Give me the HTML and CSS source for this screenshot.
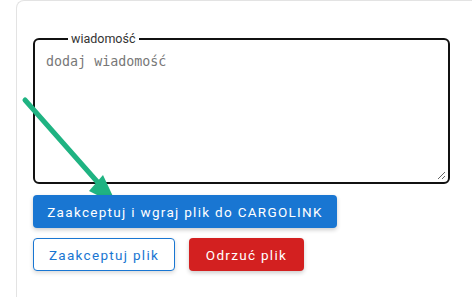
FILE: index.html
```html
<!DOCTYPE html>
<html>
<head>
    <meta charset="utf-8">
    <title>Plik</title>
    <link rel="stylesheet" href="styles.css">
</head>
<body>
    <div class="card">
        <fieldset class="msg">
            <legend>wiadomość</legend>
            <textarea placeholder="dodaj wiadomość"></textarea>
        </fieldset>

        <div class="actions">
            <button class="btn btn-primary">Zaakceptuj i wgraj plik do CARGOLINK</button>
            <div class="row">
                <button class="btn btn-outline">Zaakceptuj plik</button>
                <button class="btn btn-danger">Odrzuć plik</button>
            </div>
        </div>

        <!-- strzałka podpowiedzi -->
        <svg class="hint" width="140" height="220" viewBox="0 0 140 220">
            <line x1="25" y1="100" x2="101" y2="186" stroke="#1fb382" stroke-width="5" stroke-linecap="round"/>
            <polygon points="117,205 89,191 103,175" fill="#1fb382"/>
        </svg>
    </div>
</body>
</html>
```

FILE: styles.css
```css
html, body {
    height: 100%;
}

body {
    margin: 0;
    background: #ffffff;
    font-family: Roboto, "Liberation Sans", sans-serif;
    overflow: hidden;
}

.card {
    margin-left: 16px;
    height: 100%;
    box-sizing: border-box;
    border: 1px solid #e3e3e3;
    border-right: 0;
    border-bottom: 0;
    border-radius: 8px 0 0 0;
    padding: 30px 0 0 16px;
}

.msg {
    width: 417px;
    height: 153px;
    box-sizing: border-box;
    margin: 0;
    padding: 0 2px 2px 11px;
    border: 2px solid #111111;
    border-radius: 6px;
    display: flex;
}

.msg legend {
    margin-left: 22px;
    padding: 0 3px;
    font-size: 12.5px;
    color: #333333;
}

.msg textarea {
    flex: 1;
    border: 0;
    outline: none;
    padding: 8px 0 0 0;
    font-family: "DejaVu Sans Mono", monospace;
    font-size: 13.33px;
    resize: vertical;
}

.msg textarea::placeholder {
    color: #777777;
}

.actions {
    margin-top: 11px;
    display: flex;
    flex-direction: column;
    align-items: flex-start;
    gap: 10px;
}

.row {
    display: flex;
    gap: 14px;
}

.btn {
    position: relative;
    z-index: 2;
    height: 33px;
    border-radius: 4px;
    font-family: Roboto, "Liberation Sans", sans-serif;
    font-size: 13.5px;
    letter-spacing: 1.3px;
    padding: 0 10px;
    cursor: pointer;
}

.btn-primary {
    width: 304px;
    background: #1976d2;
    color: #ffffff;
    border: 0;
    box-shadow: 0 2px 4px rgba(0,0,0,0.2);
}

.btn-outline {
    width: 142px;
    background: #ffffff;
    color: #1976d2;
    border: 1px solid #1976d2;
    box-shadow: 0 2px 4px rgba(0,0,0,0.15);
}

.btn-danger {
    width: 115px;
    background: #d32020;
    color: #ffffff;
    border: 0;
    box-shadow: 0 2px 4px rgba(0,0,0,0.2);
}

.hint {
    position: absolute;
    left: 0;
    top: 0;
    z-index: 1;
}
```
